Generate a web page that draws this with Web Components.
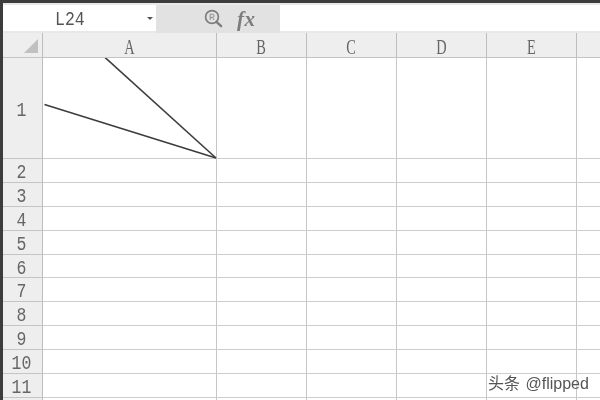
<!DOCTYPE html>
<html>
<head>
<meta charset="utf-8">
<style>
  html, body { margin: 0; width: 600px; height: 400px; overflow: hidden; background: #3c3c3c; }
</style>
</head>
<body>
<sheet-app>
  <formula-bar name="L24"></formula-bar>
  <sheet-grid></sheet-grid>
</sheet-app>

<script>
class SheetApp extends HTMLElement {
  constructor() {
    super();
    this.attachShadow({ mode: 'open' }).innerHTML = `
      <style>
        :host {
          display: flex;
          flex-direction: column;
          position: relative;
          width: 597px;
          height: 397px;
          margin: 3px 0 0 3px;
          background: #e9e9e9;
          overflow: hidden;
          filter: blur(0.35px);
        }
        .mark {
          position: absolute;
          left: 485px;
          top: 367px;
          font: 16px "Liberation Sans", "Noto Sans CJK SC", sans-serif;
          color: #555;
          white-space: nowrap;
          text-shadow: 0 0 2px #fff;
        }
        .mark span { margin-right: 1px; }
      </style>
      <slot></slot>
      <div class="mark"><span>头条</span> @flipped</div>
    `;
  }
}

class FormulaBar extends HTMLElement {
  constructor() {
    super();
    this.attachShadow({ mode: 'open' }).innerHTML = `
      <style>
        :host {
          display: flex;
          box-sizing: border-box;
          height: 30px;
          padding-top: 2px;
          background: #e8e8e8;
          flex: none;
        }
        .name {
          width: 153px;
          height: 26px;
          flex: none;
          background: #fff;
          display: flex;
          align-items: center;
          justify-content: space-between;
          box-sizing: border-box;
          padding: 0 3px 0 52px;
          font: 16.5px "Liberation Mono", monospace;
          color: #555;
        }
        .name span {
          display: inline-block;
          transform: translateY(1px) scaleY(1.27);
        }
        .arrow {
          width: 0;
          height: 0;
          border: 3px solid transparent;
          border-top: 3px solid #555;
          border-bottom: 0;
        }
        .tools {
          width: 124px;
          flex: none;
          background: #e2e2e2;
          display: flex;
          align-items: center;
          gap: 14px;
          padding-left: 48px;
          box-sizing: border-box;
        }
        .fx {
          font: italic bold 21px "Liberation Serif", serif;
          color: #7c7c7c;
          letter-spacing: 0.5px;
        }
        .input {
          flex: 1;
          height: 26px;
          background: #fff;
        }
      </style>
      <div class="name"><span id="ref"></span><i class="arrow"></i></div>
      <div class="tools">
        <svg width="19" height="20" viewBox="0 0 19 20" fill="none">
          <circle cx="8" cy="8" r="6.4" stroke="#7e7e7e" stroke-width="1.7"/>
          <path d="M12.5 12.8l4.6 4.4" stroke="#7e7e7e" stroke-width="2.4" stroke-linecap="round"/>
          <path d="M6.2 11V5.2h2.3a1.6 1.6 0 0 1 0 3.2H6.2M8.4 8.4l1.7 2.6" stroke="#8a8a8a" stroke-width="1"/>
        </svg>
        <span class="fx">fx</span>
      </div>
      <div class="input"></div>
    `;
  }

  connectedCallback() {
    this.shadowRoot.getElementById('ref').textContent = this.getAttribute('name');
  }
}

const COLUMNS = ['A', 'B', 'C', 'D', 'E', ''];
const COLUMN_WIDTHS = [174, 90, 90, 90, 90, 30];
const ROW_HEIGHTS = [101, 24, 24, 24, 24, 23, 24, 24, 24, 24, 24, 24];

class SheetGrid extends HTMLElement {
  constructor() {
    super();
    const head = COLUMNS.map(c => `<div class="head col"><span>${c}</span></div>`).join('');
    const rows = ROW_HEIGHTS.map((h, i) => {
      const label = i < 11 ? i + 1 : '';
      const cells = COLUMNS.map(() => '<div class="cell"></div>').join('');
      return `<div class="head row"><span>${label}</span></div>${cells}`;
    }).join('');

    this.attachShadow({ mode: 'open' }).innerHTML = `
      <style>
        :host {
          display: block;
          position: relative;
          flex: none;
          background: #fff;
        }
        .grid {
          display: grid;
          grid-template-columns: 40px ${COLUMN_WIDTHS.map(w => w + 'px').join(' ')};
          grid-template-rows: 25px ${ROW_HEIGHTS.map(h => h + 'px').join(' ')};
        }
        .head {
          background: #eeeeee;
          box-sizing: border-box;
          border-right: 1px solid #bdbdbd;
          border-bottom: 1px solid #c4c4c4;
          display: flex;
          align-items: center;
          justify-content: center;
          color: #666;
        }
        .head span { display: inline-block; }
        .col { font: 18px "Liberation Serif", serif; }
        .col span { transform: translateY(2px) scale(0.8, 1.2); }
        .row { font: 16.5px "Liberation Mono", monospace; }
        .row span { transform: translate(-1px, 2px) scaleY(1.27); }
        .cell {
          box-sizing: border-box;
          border-right: 1px solid #c6c6c6;
          border-bottom: 1px solid #cdcdcd;
        }
        .corner {
          background: #eeeeee;
          box-sizing: border-box;
          border-right: 1px solid #bdbdbd;
          border-bottom: 1px solid #c4c4c4;
          display: flex;
          align-items: flex-end;
          justify-content: flex-end;
          padding: 0 4px 4px 0;
        }
        .corner i {
          width: 0;
          height: 0;
          border-left: 14px solid transparent;
          border-bottom: 14px solid #c0c0c0;
        }
        svg.lines {
          position: absolute;
          left: 40px;
          top: 25px;
          pointer-events: none;
        }
      </style>
      <div class="grid">
        <div class="corner"><i></i></div>
        ${head}
        ${rows}
      </div>
      <svg class="lines" width="175" height="102" viewBox="0 0 175 102" fill="none">
        <path d="M61.5 -1L173 100" stroke="#3c3c3c" stroke-width="1.6"/>
        <path d="M1.5 46.5L173 100" stroke="#3c3c3c" stroke-width="1.6"/>
      </svg>
    `;
  }
}

customElements.define('sheet-app', SheetApp);
customElements.define('formula-bar', FormulaBar);
customElements.define('sheet-grid', SheetGrid);
</script>
</body>
</html>
